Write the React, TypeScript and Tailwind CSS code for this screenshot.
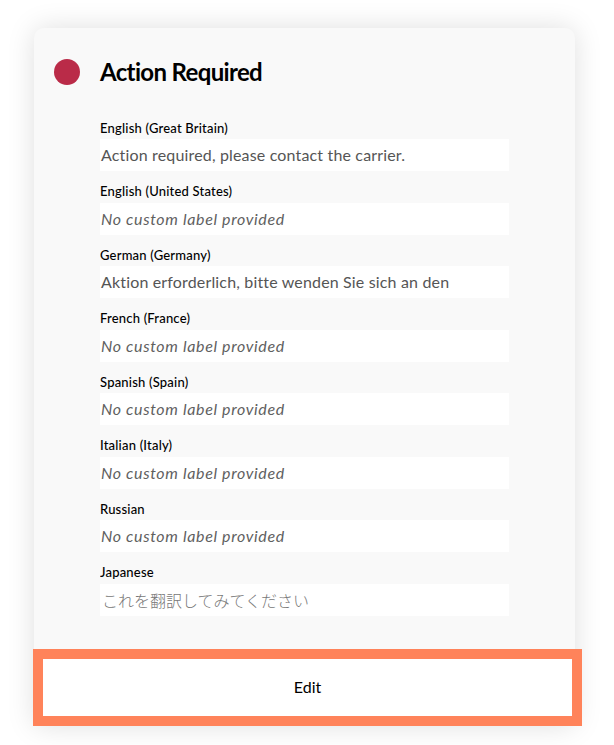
import React from "react";

const rows: { label: string; value: string; kind: "text" | "empty" | "jp" }[] = [
  { label: "English (Great Britain)", value: "Action required, please contact the carrier.", kind: "text" },
  { label: "English (United States)", value: "No custom label provided", kind: "empty" },
  { label: "German (Germany)", value: "Aktion erforderlich, bitte wenden Sie sich an den", kind: "text" },
  { label: "French (France)", value: "No custom label provided", kind: "empty" },
  { label: "Spanish (Spain)", value: "No custom label provided", kind: "empty" },
  { label: "Italian (Italy)", value: "No custom label provided", kind: "empty" },
  { label: "Russian", value: "No custom label provided", kind: "empty" },
  { label: "Japanese", value: "これを翻訳してみてください", kind: "jp" },
];

export default function App() {
  return (
    <div
      className="w-[614px] h-[745px] overflow-hidden bg-white pt-[28px] pl-[34px]"
      style={{ fontFamily: "Lato, 'Noto Sans CJK JP', sans-serif" }}
    >
      <div className="w-[541px] rounded-t-[10px] bg-[#f9f9f9] shadow-[0_0_28px_rgba(0,0,0,0.13)]">
        <div className="flex items-center gap-[20px] pl-[20px] pt-[30px]">
          <div className="w-[26px] h-[26px] rounded-full bg-[#ba2b48] shrink-0" />
          <h1 className="text-[24px] leading-[28px] font-bold text-black tracking-[-0.65px]">Action Required</h1>
        </div>
        <div className="pl-[66px] pr-[66px] pt-[33.5px] pb-[21px] flex flex-col">
          {rows.map((r) => (
            <div key={r.label} className="h-[63.5px] flex flex-col">
              <div className="text-[13px] leading-[16px] font-medium text-black mb-[3.5px] tracking-[0.2px] truncate">
                {r.label}
              </div>
              <div className="h-[32px] bg-white flex items-center pl-[1px] overflow-hidden whitespace-nowrap">
                {r.kind === "text" && (
                  <span className="text-[16px] text-[#555555] tracking-[0.16px]">{r.value}</span>
                )}
                {r.kind === "empty" && (
                  <span className="text-[16px] italic font-normal text-[#5f5f5f] tracking-[0.65px]">{r.value}</span>
                )}
                {r.kind === "jp" && (
                  <span
                    className="text-[16px] font-light text-[#777777] pl-[1px]"
                    style={{ fontFamily: "'Noto Sans CJK JP', sans-serif" }}
                  >
                    {r.value}
                  </span>
                )}
              </div>
            </div>
          ))}
        </div>
        <button className="-ml-[1px] w-[549px] h-[77px] border-[10px] border-[#ff835a] bg-white flex items-center justify-center text-[16px] font-normal text-black">
          Edit
        </button>
      </div>
    </div>
  );
}
